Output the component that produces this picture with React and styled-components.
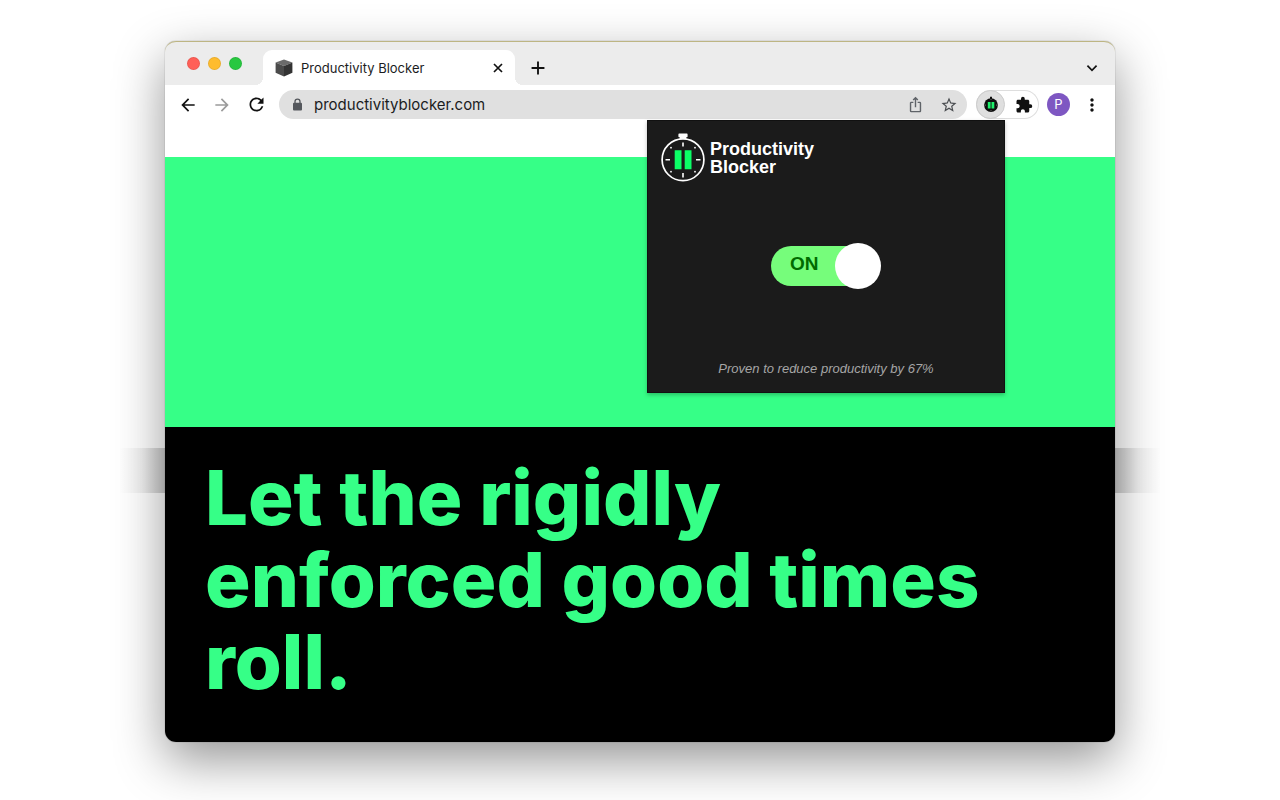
import React, { useState } from 'react'
import styled, { createGlobalStyle } from 'styled-components'
import { MdArrowBack, MdArrowForward, MdRefresh, MdStarBorder, MdExtension, MdMoreVert, MdIosShare } from 'react-icons/md'

const Cube = () => (
  <svg width="18" height="18" viewBox="0 0 18 18" aria-hidden="true">
    <path d="M9 0.6 17.4 3.4 9 7 0.6 3.4Z" fill="#6b6b6b" />
    <path d="M0.6 3.4 9 7V17.6L0.6 13.8Z" fill="#4b4b4b" />
    <path d="M17.4 3.4 9 7V17.6L17.4 13.8Z" fill="#333" />
  </svg>
)

const Lock = () => (
  <svg width="13" height="13" viewBox="0 0 13 13" aria-hidden="true">
    <path d="M4 6V3.6a2.5 2.5 0 0 1 5 0V6" fill="none" stroke="#54575c" strokeWidth="1.3" />
    <rect x="2" y="4.8" width="9" height="7.6" rx="1" fill="#54575c" />
  </svg>
)

const Stroke = ({ size, d, width }) => (
  <svg width={size} height={size} viewBox="0 0 14 14" fill="none" stroke="#111" strokeWidth={width} aria-hidden="true">
    <path d={d} />
  </svg>
)

const Stopwatch = () => (
  <svg width="44" height="50" viewBox="0 0 44 50" aria-hidden="true">
    <path d="M18.2 0.6h7.6q0.8 0 0.8 0.8v2q0 0.8-0.8 0.8h-0.6l0.6 3.4h-7.6l0.6-3.4h-0.6q-0.8 0-0.8-0.8v-2q0-0.8 0.8-0.8Z" fill="#fff" />
    <circle cx="22" cy="26.7" r="20.9" fill="#1b1b1b" stroke="#fff" strokeWidth="1.7" />
    <path d="M22 9.5v4M22 40v4.5M4.5 26.7h4.5M35 26.7h4.5" stroke="#fff" strokeWidth="1.6" />
    <g fill="#fff">
      <circle cx="10" cy="14.7" r="0.9" />
      <circle cx="34" cy="14.7" r="0.9" />
      <circle cx="10" cy="38.7" r="0.9" />
      <circle cx="34" cy="38.7" r="0.9" />
    </g>
    <path d="M13.7 17.3h6.8v19H13.7ZM23.7 17.3h6.8v19h-6.8Z" fill="#0bff66" />
  </svg>
)

const StopwatchSmall = () => (
  <svg width="16" height="17" viewBox="0 0 16 17" aria-hidden="true">
    <path d="M7 0.8h2v2.6H7Z" fill="#111" />
    <circle cx="8" cy="9.1" r="6.9" fill="#0d0d0d" />
    <path d="M1.8 9.1h1.2M13 9.1h1.2M8 3v1M8 14.2v1" stroke="#999" strokeWidth="0.7" />
    <path d="M4.8 6h2.8v6.4H4.8ZM8.5 6h2.8v6.4H8.5Z" fill="#1df06b" />
  </svg>
)

const App = () => {
  const [enabled, setEnabled] = useState(true)

  return (
    <Desktop>
      <GlobalStyle />
      <Window>
        <TabStrip>
          <Lights>
            <Light $color="#ff5f57" />
            <Light $color="#febc2e" />
            <Light $color="#28c840" />
          </Lights>
          <Tab>
            <Cube />
            <TabTitle>Productivity Blocker</TabTitle>
            <IconButton aria-label="Close tab"><Stroke size={14} width={1.7} d="M3 3l8 8M11 3l-8 8" /></IconButton>
          </Tab>
          <IconButton aria-label="New tab"><Stroke size={20} width={1.3} d="M7 2.5v9M2.5 7h9" /></IconButton>
          <TabSearch aria-label="Search tabs"><Stroke size={16} width={1.5} d="M3 5l4 4 4-4" /></TabSearch>
        </TabStrip>

        <Toolbar>
          <NavButtons>
            <IconButton aria-label="Back"><MdArrowBack size={20} /></IconButton>
            <IconButton aria-label="Forward" $color="#9b9b9b"><MdArrowForward size={20} /></IconButton>
            <IconButton aria-label="Reload"><MdRefresh size={21} /></IconButton>
          </NavButtons>
          <Omnibox>
            <Lock />
            <Address aria-label="Address" defaultValue="productivityblocker.com" />
            <IconButton aria-label="Share" $color="#5f6368"><MdIosShare size={17} /></IconButton>
            <IconButton aria-label="Bookmark" $color="#4a4d51"><MdStarBorder size={18} /></IconButton>
          </Omnibox>
          <Extensions>
            <ActiveExtension aria-label="Productivity Blocker"><StopwatchSmall /></ActiveExtension>
            <IconButton aria-label="Extensions"><MdExtension size={18} /></IconButton>
          </Extensions>
          <Avatar aria-label="Profile">P</Avatar>
          <IconButton aria-label="Menu"><MdMoreVert size={20} /></IconButton>

          <Popup>
            <Brand>
              <Stopwatch />
              <BrandName>Productivity<br />Blocker</BrandName>
            </Brand>
            <Switch>
              <SwitchInput
                type="checkbox"
                role="switch"
                checked={enabled}
                onChange={(e) => setEnabled(e.target.checked)}
              />
              <Track $on={enabled}>{enabled ? 'ON' : 'OFF'}</Track>
              <Knob $on={enabled} />
            </Switch>
            <Tagline>Proven to reduce productivity by 67%</Tagline>
          </Popup>
        </Toolbar>

        <Page>
          <Banner />
          <Hero>
            <Headline>Let the rigidly enforced good times roll.</Headline>
          </Hero>
        </Page>
      </Window>
    </Desktop>
  )
}

export default App

const GlobalStyle = createGlobalStyle`
  *, *::before, *::after {
    box-sizing: border-box;
  }
  body {
    margin: 0;
    background: #fff;
    font-family: Inter, "Liberation Sans", sans-serif;
  }
  button, input {
    font: inherit;
    border: none;
    background: none;
    padding: 0;
    margin: 0;
  }
`;

const Desktop = styled.main`
  padding: 41px 24px 58px;
  overflow: hidden;
`;

const Window = styled.div`
  position: relative;
  max-width: 950px;
  margin: 0 auto;
  border-radius: 11px;
  background: #fff;
  box-shadow: 0 0 1px rgba(0, 0, 0, 0.6), 0 18px 50px rgba(0, 0, 0, 0.42);
  &::before,
  &::after {
    content: "";
    position: absolute;
    top: 407px;
    width: 46px;
    height: 45px;
  }
  &::before {
    right: 100%;
    background: linear-gradient(to left, rgba(0, 0, 0, 0.2), rgba(0, 0, 0, 0.06) 50%, transparent);
  }
  &::after {
    left: 100%;
    background: linear-gradient(to right, rgba(0, 0, 0, 0.2), rgba(0, 0, 0, 0.06) 50%, transparent);
  }
`;

const TabStrip = styled.div`
  display: flex;
  align-items: center;
  height: 44px;
  padding: 8px 15px 0 22px;
  border-top: 1px solid #bdb583;
  border-radius: 11px 11px 0 0;
  background: #ececec;
`;

const Lights = styled.div`
  display: flex;
  gap: 8px;
  width: 76px;
  padding-bottom: 8px;
`;

const Light = styled.span`
  width: 13px;
  height: 13px;
  border-radius: 50%;
  border: 1px solid rgba(0, 0, 0, 0.08);
  background: ${({ $color }) => $color};
`;

const Tab = styled.div`
  position: relative;
  display: flex;
  align-items: center;
  gap: 8px;
  width: 252px;
  height: 35px;
  margin-right: 13px;
  padding: 0 10px 0 12px;
  border-radius: 9px 9px 0 0;
  background: #fff;
  &::before,
  &::after {
    content: "";
    position: absolute;
    bottom: 0;
    width: 8px;
    height: 8px;
  }
  &::before {
    right: 100%;
    background: radial-gradient(circle at 0 0, transparent 8px, #fff 8px);
  }
  &::after {
    left: 100%;
    background: radial-gradient(circle at 100% 0, transparent 8px, #fff 8px);
  }
`;

const TabTitle = styled.span`
  flex: 1;
  font-size: 13px;
  color: #1b1c1e;
`;

const IconButton = styled.button`
  display: flex;
  align-items: center;
  justify-content: center;
  color: ${({ $color }) => $color || '#111'};
  cursor: pointer;
`;

const TabSearch = styled(IconButton)`
  margin-left: auto;
`;

const Toolbar = styled.div`
  position: relative;
  display: flex;
  align-items: center;
  height: 39px;
  padding: 0 13px;
`;

const NavButtons = styled.div`
  display: flex;
  gap: 14px;
  margin-right: 12px;
`;

const Omnibox = styled.div`
  display: flex;
  flex: 1;
  align-items: center;
  gap: 16px;
  min-width: 0;
  height: 29px;
  padding: 0 9px 0 12px;
  border-radius: 15px;
  background: #e0e0e0;
`;

const Address = styled.input`
  flex: 1;
  min-width: 0;
  margin-left: -6px;
  font-size: 15px;
  color: #1b1c1e;
  outline: none;
`;

const Extensions = styled.div`
  display: flex;
  align-items: center;
  gap: 10px;
  width: 63px;
  height: 29px;
  margin: 0 8px 0 9px;
  border-radius: 15px;
  box-shadow: inset 0 0 0 1px #dedede;
`;

const ActiveExtension = styled(IconButton)`
  width: 29px;
  height: 29px;
  border-radius: 50%;
  border: 1px solid #ccc;
  background: #dfdfdf;
`;

const Avatar = styled.button`
  width: 23px;
  height: 23px;
  margin-right: 12px;
  border-radius: 50%;
  background: #7e57c2;
  color: #fff;
  font-size: 13px;
  line-height: 23px;
`;

const Popup = styled.section`
  position: absolute;
  z-index: 2;
  top: 35px;
  right: 110px;
  display: flex;
  flex-direction: column;
  align-items: center;
  width: 358px;
  padding: 12px 13px 16px;
  border: 1px solid #111;
  background: #1b1b1b;
  box-shadow: 0 2px 4px rgba(0, 0, 0, 0.25);
  font-family: "Liberation Sans", Arial, sans-serif;
`;

const Brand = styled.div`
  display: flex;
  align-items: center;
  align-self: stretch;
  gap: 5px;
`;

const BrandName = styled.h1`
  margin: 0;
  font-size: 18px;
  line-height: 18px;
  color: #fff;
`;

const Switch = styled.label`
  position: relative;
  display: flex;
  align-items: center;
  width: 110px;
  height: 46px;
  margin: 60px 0 72px;
  cursor: pointer;
`;

const SwitchInput = styled.input`
  position: absolute;
  opacity: 0;
`;

const Track = styled.span`
  width: 106px;
  height: 40px;
  padding-left: ${({ $on }) => ($on ? '19px' : '50px')};
  border-radius: 20px;
  background: ${({ $on }) => ($on ? '#76fd7b' : '#777')};
  color: ${({ $on }) => ($on ? '#006b00' : '#222')};
  font-size: 19px;
  font-weight: bold;
  line-height: 36px;
`;

const Knob = styled.span`
  position: absolute;
  ${({ $on }) => ($on ? 'right: 0;' : 'left: 0;')}
  width: 46px;
  height: 46px;
  border-radius: 50%;
  background: #fff;
`;

const Tagline = styled.p`
  margin: 0;
  font-size: 13px;
  font-style: italic;
  line-height: 15px;
  color: #a6a6a6;
`;

const Page = styled.div`
  padding-top: 33px;
`;

const Banner = styled.div`
  height: 270px;
  background: #36ff87;
`;

const Hero = styled.div`
  padding: 29px 40px 40px;
  border-radius: 0 0 11px 11px;
  background: #000;
`;

const Headline = styled.h2`
  margin: 0;
  font-size: 76px;
  font-weight: 800;
  line-height: 82px;
  color: #36ff87;
`;
